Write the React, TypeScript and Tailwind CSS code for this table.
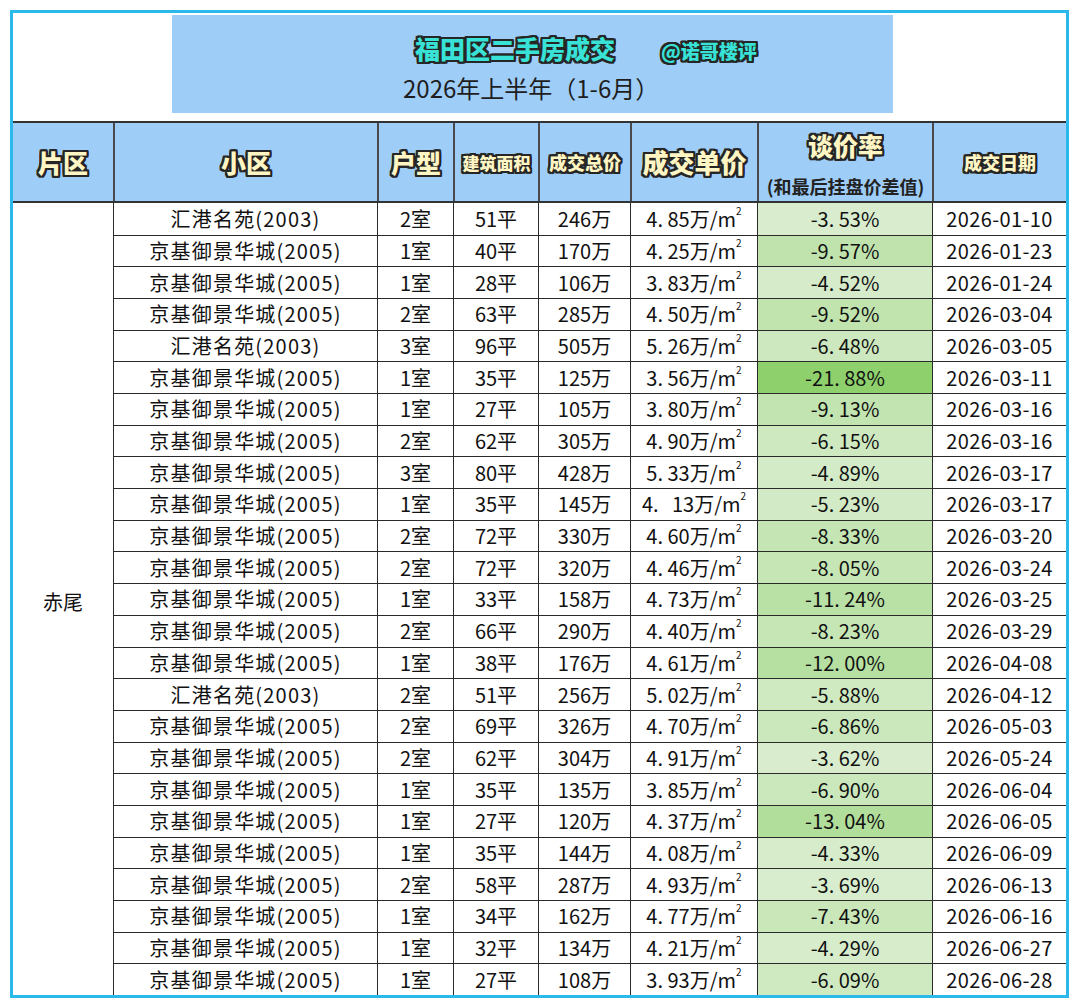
import React from "react";

type Row = [string, string, string, string, string, number, string];

const J = "京基御景华城(2005)";
const H = "汇港名苑(2003)";

const rows: Row[] = [
  [H, "2室", "51平", "246万", "4. 85", 3.53, "2026-01-10"],
  [J, "1室", "40平", "170万", "4. 25", 9.57, "2026-01-23"],
  [J, "1室", "28平", "106万", "3. 83", 4.52, "2026-01-24"],
  [J, "2室", "63平", "285万", "4. 50", 9.52, "2026-03-04"],
  [H, "3室", "96平", "505万", "5. 26", 6.48, "2026-03-05"],
  [J, "1室", "35平", "125万", "3. 56", 21.88, "2026-03-11"],
  [J, "1室", "27平", "105万", "3. 80", 9.13, "2026-03-16"],
  [J, "2室", "62平", "305万", "4. 90", 6.15, "2026-03-16"],
  [J, "3室", "80平", "428万", "5. 33", 4.89, "2026-03-17"],
  [J, "1室", "35平", "145万", "4.   13", 5.23, "2026-03-17"],
  [J, "2室", "72平", "330万", "4. 60", 8.33, "2026-03-20"],
  [J, "2室", "72平", "320万", "4. 46", 8.05, "2026-03-24"],
  [J, "1室", "33平", "158万", "4. 73", 11.24, "2026-03-25"],
  [J, "2室", "66平", "290万", "4. 40", 8.23, "2026-03-29"],
  [J, "1室", "38平", "176万", "4. 61", 12.0, "2026-04-08"],
  [H, "2室", "51平", "256万", "5. 02", 5.88, "2026-04-12"],
  [J, "2室", "69平", "326万", "4. 70", 6.86, "2026-05-03"],
  [J, "2室", "62平", "304万", "4. 91", 3.62, "2026-05-24"],
  [J, "1室", "35平", "135万", "3. 85", 6.9, "2026-06-04"],
  [J, "1室", "27平", "120万", "4. 37", 13.04, "2026-06-05"],
  [J, "1室", "35平", "144万", "4. 08", 4.33, "2026-06-09"],
  [J, "2室", "58平", "287万", "4. 93", 3.69, "2026-06-13"],
  [J, "1室", "34平", "162万", "4. 77", 7.43, "2026-06-16"],
  [J, "1室", "32平", "134万", "4. 21", 4.29, "2026-06-27"],
  [J, "1室", "27平", "108万", "3. 93", 6.09, "2026-06-28"],
];

function green(v: number): string {
  const t = Math.max(0, Math.min(1, (v - 3.53) / (21.88 - 3.53)));
  const a = [217, 237, 206];
  const b = [142, 208, 108];
  const c = a.map((x, i) => Math.round(x + (b[i] - x) * t));
  return `rgb(${c[0]},${c[1]},${c[2]})`;
}

function fmtPct(v: number): string {
  const s = v.toFixed(2);
  const [i, d] = s.split(".");
  return `-${i}. ${d}%`;
}

const OUT =
  "[text-shadow:2px_0_0_#262626,-2px_0_0_#262626,0_2px_0_#262626,0_-2px_0_#262626,2px_2px_0_#262626,-2px_-2px_0_#262626,2px_-2px_0_#262626,-2px_2px_0_#262626,1px_2px_0_#262626,2px_1px_0_#262626,-1px_2px_0_#262626,-2px_1px_0_#262626,1px_-2px_0_#262626,2px_-1px_0_#262626,-1px_-2px_0_#262626,-2px_-1px_0_#262626]";

const HEAD = "font-black text-[#fff6c4] leading-none " + OUT;

const COLS = "grid grid-cols-[100px_264px_76px_85px_92px_127px_175px_134px]";

export default function App() {
  return (
    <div className="w-[1080px] h-[1006px] bg-white pt-[10px] pl-[10px] font-['Noto_Sans_CJK_SC','Noto_Sans',sans-serif] text-[#111]">
      <div className="w-[1059px] h-[988px] border-[3px] border-[#2bb8ea] flex flex-col">
        {/* Title area */}
        <div className="h-[108px] pt-[2px] pl-[159px] shrink-0">
          <div className="w-[721px] h-[98px] bg-[#9ecdf8] flex flex-col">
            <div className="flex items-start h-[50px] pl-[243px] pt-[16px]">
              <span className={"text-[25px] h-[34px] leading-[34px] font-black text-[#38e2d6] " + OUT}>
                福田区二手房成交
              </span>
              <span className={"ml-[46px] mt-[8px] text-[19px] leading-[24px] font-black text-[#38e2d6] " + OUT}>
                @诺哥楼评
              </span>
            </div>
            <div className="pl-[231px] mt-[9px] h-[28px] leading-[28px] text-[24px] text-[#1e1e1e]">
              2026年上半年（1-6月）
            </div>
          </div>
        </div>

        {/* Header */}
        <div className={COLS + " h-[82px] shrink-0 bg-[#9ecdf8] border-t-2 border-b-2 border-[#333]"}>
          <div className="flex items-center justify-center">
            <span className={HEAD + " text-[25px]"}>片区</span>
          </div>
          <div className="flex items-center justify-center border-l-2 border-[#4a4a4a]">
            <span className={HEAD + " text-[25px]"}>小区</span>
          </div>
          <div className="flex items-center justify-center border-l-2 border-[#4a4a4a]">
            <span className={HEAD + " text-[25px]"}>户型</span>
          </div>
          <div className="flex items-center justify-center border-l-2 border-[#4a4a4a]">
            <span className={HEAD + " text-[17px]"}>建筑面积</span>
          </div>
          <div className="flex items-center justify-center border-l-2 border-[#4a4a4a]">
            <span className={HEAD + " text-[18px]"}>成交总价</span>
          </div>
          <div className="flex items-center justify-center border-l-2 border-[#4a4a4a]">
            <span className={HEAD + " text-[26px]"}>成交单价</span>
          </div>
          <div className="flex flex-col items-center border-l-2 border-[#4a4a4a] pt-[10px]">
            <span className={HEAD + " text-[25px] h-[30px] leading-[30px]"}>谈价率</span>
            <span className="mt-[12px] h-[22px] leading-[22px] text-[18px] font-bold text-[#222]">
              (和最后挂盘价差值)
            </span>
          </div>
          <div className="flex items-center justify-center border-l-2 border-[#4a4a4a]">
            <span className={HEAD + " text-[18px]"}>成交日期</span>
          </div>
        </div>

        {/* Body */}
        <div className={COLS + " flex-1 grid-rows-[repeat(25,minmax(0,1fr))] text-[20px] leading-none"}>
          <div className="row-span-25 flex items-center justify-center pt-[6px]">赤尾</div>
          {rows.map((r, i) => {
            const top = i === 0 ? "" : " border-t";
            const cell = "flex items-center justify-center border-l border-[#2a2a2a]" + top;
            return (
              <React.Fragment key={i}>
                <div className={cell + " tracking-[1.2px]"}>{r[0]}</div>
                <div className={cell}>{r[1]}</div>
                <div className={cell}>{r[2]}</div>
                <div className={cell}>{r[3]}</div>
                <div className={cell + " whitespace-pre"}>
                  {r[4]}万/m<sup className="text-[10px] top-[-0.8em]">2</sup>
                </div>
                <div className={cell} style={{ backgroundColor: green(r[5]) }}>
                  {fmtPct(r[5])}
                </div>
                <div className={cell + " tracking-[0.4px]"}>{r[6]}</div>
              </React.Fragment>
            );
          })}
        </div>
      </div>
    </div>
  );
}
